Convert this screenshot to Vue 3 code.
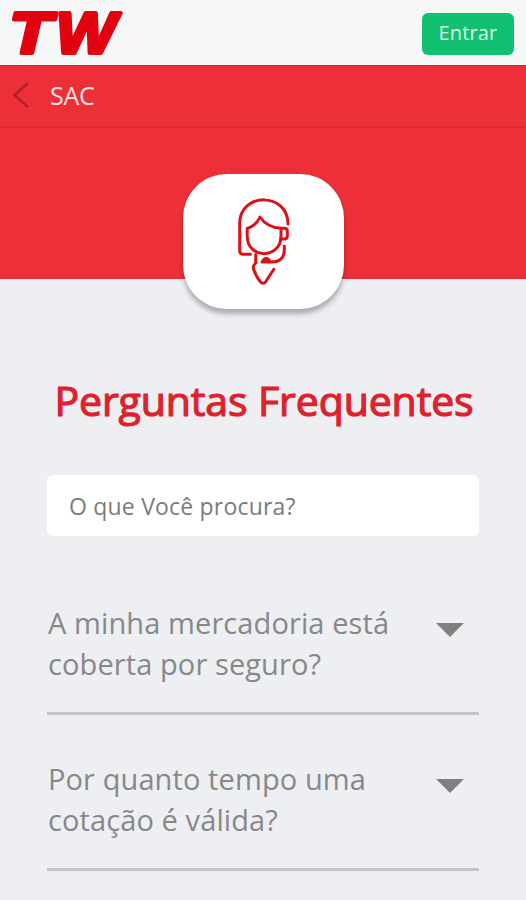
<script setup>
import { ref } from 'vue';

const search = ref('');
const opened = ref(null);

const questions = [
  { id: 1, title: 'A minha mercadoria está coberta por seguro?' },
  { id: 2, title: 'Por quanto tempo uma cotação é válida?' },
];

const toggle = (id) => {
  opened.value = opened.value === id ? null : id;
};
</script>

<template>
  <div class="page">
    <header class="topbar">
      <svg class="logo" viewBox="0 0 126 64" aria-label="TW">
        <text class="letter-t" x="9.5" y="52" textLength="42" lengthAdjust="spacingAndGlyphs">T</text>
        <text class="letter-w" x="56" y="52" textLength="60" lengthAdjust="spacingAndGlyphs">W</text>
      </svg>
      <button class="login-btn">Entrar</button>
    </header>

    <nav class="subbar">
      <svg class="back" viewBox="0 0 18 28">
        <path d="M16 2 L2.5 14 L16 26" />
      </svg>
      <span class="subbar-title">SAC</span>
    </nav>

    <section class="banner">
      <div class="badge">
        <svg class="agent" viewBox="235 195 58 92">
          <path d="M250.5 254.3 H243 Q239.7 254.3 239.7 251 V223 C240 192 287.8 192 288 224" />
          <path d="M247.2 228.5 Q256 226 260 217 Q267 227.5 281 228.3 V236 C281 259.5 247.2 259.5 247.2 236 Z" />
          <path d="M281 228.3 H284 Q287.3 228.3 287.3 231 V236 Q287.3 239 284 239 H280.5" />
          <path d="M284.3 246 V250 Q284.3 262 271.5 262 H262" />
          <path class="mic" d="M261.5 262 Q262 257.5 266 257.5 Q270.5 257.5 271 262 Z" />
          <path d="M255.7 254.5 V263 Q253 265.5 253.2 268 Q256 276.5 260 281.3 Q263 285.4 266 281.3 L273.8 269.3" />
        </svg>
      </div>
    </section>

    <main class="content">
      <h1>Perguntas Frequentes</h1>
      <input v-model="search" class="search" type="text" placeholder="O que Você procura?" />
      <ul class="questions">
        <li v-for="q in questions" :key="q.id" @click="toggle(q.id)">
          <span class="question">{{ q.title }}</span>
          <svg class="arrow" :class="{ open: opened === q.id }" viewBox="0 0 28 14">
            <path d="M0 0 H28 L14 14 Z" />
          </svg>
        </li>
      </ul>
    </main>
  </div>
</template>

<style>
body {
  background-color: #edeff3;
}
</style>

<style scoped>
.page {
  height: 900px;
  overflow: hidden;
  font-family: "Open Sans", "Noto Sans", sans-serif;
  background-color: #edeff3;
}

.topbar {
  display: flex;
  justify-content: space-between;
  align-items: center;
  box-sizing: border-box;
  height: 65px;
  padding-right: 12px;
  background-color: #f6f8f7;
}

.logo {
  width: 126px;
  height: 64px;
}

.logo text {
  font-family: "Liberation Sans", Arial, sans-serif;
  font-size: 57px;
  font-weight: bold;
  font-style: italic;
  fill: #e3000f;
  stroke: #e3000f;
  stroke-linejoin: round;
}

.logo .letter-t {
  stroke-width: 4px;
}

.logo .letter-w {
  stroke-width: 4px;
}

.login-btn {
  width: 92px;
  height: 42px;
  margin-top: 2px;
  padding: 0 0 2px;
  font-family: inherit;
  font-size: 20px;
  letter-spacing: 0.15px;
  color: #d5f7e5;
  background-color: #11c171;
  border: none;
  border-radius: 6px;
  cursor: pointer;
}

.subbar {
  display: flex;
  align-items: center;
  box-sizing: border-box;
  height: 63px;
  padding: 0 0 2px 12px;
  background-color: #ed3037;
  border-top: 1px solid #d9282e;
  border-bottom: 2px solid #d92b31;
}

.back {
  width: 18px;
  height: 28px;
}

.back path {
  fill: none;
  stroke: #b32227;
  stroke-width: 2.8;
}

.subbar-title {
  margin-left: 20px;
  font-size: 25px;
  letter-spacing: -0.3px;
  color: #fde4e4;
}

.banner {
  display: flex;
  justify-content: center;
  align-items: flex-start;
  box-sizing: border-box;
  height: 151px;
  padding-top: 46px;
  background-color: #ed3037;
}

.badge {
  display: flex;
  justify-content: center;
  box-sizing: border-box;
  flex-shrink: 0;
  width: 161px;
  height: 135px;
  padding-top: 21px;
  background-color: white;
  border-radius: 44px;
  box-shadow: 0 5px 5px rgba(0, 0, 0, 0.28);
}

.agent {
  width: 58px;
  height: 92px;
  margin-left: 2px;
}

.agent path {
  fill: none;
  stroke: #dc1015;
  stroke-width: 3;
  stroke-linecap: round;
  stroke-linejoin: round;
}

.agent .mic {
  fill: #dc1015;
  stroke-width: 1;
}

.content {
  padding: 91px 47px 0 48px;
}

h1 {
  margin: 0 0 0 1px;
  font-size: 41px;
  font-weight: 400;
  line-height: 60px;
  letter-spacing: -0.1px;
  text-align: center;
  white-space: nowrap;
  color: #e0202a;
  -webkit-text-stroke: 1.2px #e0202a;
}

.search {
  display: block;
  box-sizing: border-box;
  width: 432px;
  height: 61px;
  margin: 45px 0 0 -1px;
  padding: 0 22px;
  font-family: inherit;
  font-size: 23px;
  letter-spacing: 0.2px;
  color: #666;
  background-color: white;
  border: none;
  border-radius: 6px;
  outline: none;
}

.search::placeholder {
  color: #7b7b7b;
  opacity: 1;
}

.questions {
  margin: 66px 0 0 -1px;
  padding: 0;
  list-style: none;
}

.questions li {
  display: flex;
  justify-content: space-between;
  align-items: flex-start;
  box-sizing: border-box;
  height: 113px;
  margin-bottom: 43px;
  padding: 0 15px 0 1px;
  border-bottom: 3px solid #c3c5c9;
  cursor: pointer;
}

.question {
  width: 360px;
  font-size: 29px;
  line-height: 41px;
  letter-spacing: 0.1px;
  color: #888;
}

.arrow {
  width: 28px;
  height: 14px;
  margin-top: 21px;
}

.arrow path {
  fill: #808080;
}

.arrow.open {
  transform: rotate(180deg);
}
</style>
